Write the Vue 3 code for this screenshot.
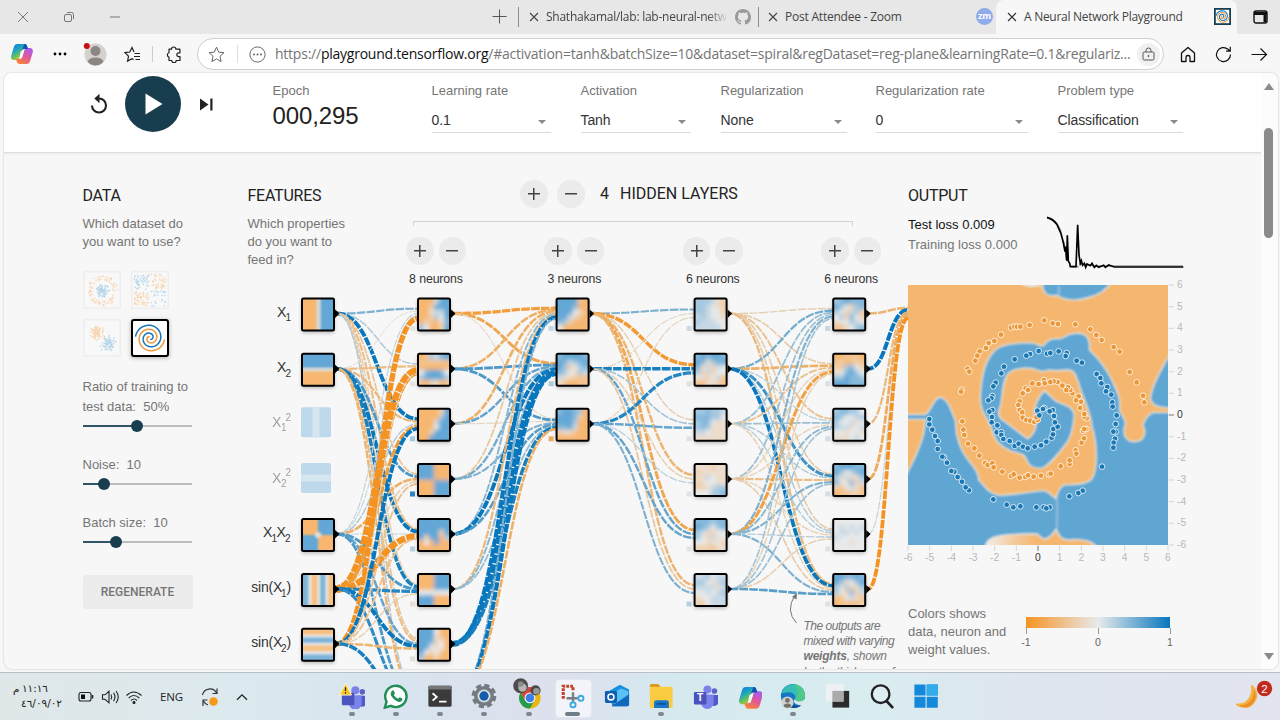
<script setup>
const rowY = [314.5, 369.8, 424.8, 480, 535, 590, 644.8, 700]
const colX = [434, 572.6, 710.6, 849.2]

const inputs = [
  { y: rowY[0], heat: 'vert' },
  { y: rowY[1], heat: 'horz' },
  { y: rowY[4], heat: 'quad' },
  { y: rowY[5], heat: 'sinv' },
  { y: rowY[6], heat: 'sinh' }
]

// 6x6 activation maps: 0 is fully orange, 4 neutral, 8 fully blue
const heat = [
  [
    '000588/002888/003558/002648/021037/640028',
    '016578/111111/000000/478874/688886/102301',
    '000028/000068/000588/000488/002888/008888',
    '888000/888000/888000/000888/000888/000888',
    '888888/888888/888828/828806/040800/000000',
    '000888/000888/000888/444444/888000/888000',
    '888400/888310/887240/884340/842410/600200',
    '888000/888000/888000/000888/000888/000888'
  ],
  ['888810/888700/888430/885310/762000/400000', '788887/875678/861467/764365/533211/310011', '788760/888720/888600/778500/233100/000000'],
  [
    '666532/665432/665442/565443/655544/555554',
    '787887/873678/735254/625244/432451/113321',
    '667665/777664/677433/676333/554333/333333',
    '333233/233333/335433/234433/223566/444667',
    '777677/876467/653244/642534/443342/222133',
    '556455/664356/555535/445456/344555/224555'
  ],
  [
    '678777/864267/642562/462742/344654/113467',
    '001110/120121/216742/347864/668776/888777',
    '677664/764456/644534/655345/443443/333454',
    '788877/864578/635336/743725/214531/011221',
    '444444/454545/455454/544444/444344/444444',
    '887787/863468/636236/642725/114531/011112'
  ]
]

function mix(v) {
  const t = Math.abs(v)
  const end = v < 0 ? [247, 183, 112] : [98, 167, 214]
  return 'rgb(' + [232, 234, 235].map((c, i) => Math.round(c + (end[i] - c) * t)).join(',') + ')'
}
function linkColor(v) {
  const t = Math.min(1, Math.abs(v))
  const end = v < 0 ? [245, 147, 34] : [8, 119, 189]
  return 'rgb(' + [226, 226, 222].map((c, i) => Math.round(c + (end[i] - c) * t)).join(',') + ')'
}
function cells(map) {
  const out = []
  map.split('/').forEach((row, r) => {
    row.split('').forEach((d, c) => {
      out.push({
        x: c === 0 ? -22 : c * 5 - 15, y: r === 0 ? -22 : r * 5 - 15,
        w: c === 0 || c === 5 ? 12.3 : 5.3, h: r === 0 || r === 5 ? 12.3 : 5.3,
        fill: mix((d - 4) / 4)
      })
    })
  })
  return out
}

const biases = [
  ['#e3e3df', '#e3e3df', '#a5c9e1', '#2e83be', '#b4cfe0', '#e6e0d5', '#e0dfd8', '#ddd'],
  ['#c3d8e5', '#a8cadf', '#f0aa5c'],
  ['#c9dbe6', '#e4dfd8', '#dfe2e3', '#dfe3e6', '#e2e3e3', '#b5cfe0'],
  ['#c5d9e5', '#d6e0e7', '#d3dfe6', '#d3dfe6', '#dde3e6', '#dde3e6']
]
const nodes = []
heat.forEach((layer, l) => layer.forEach((m, i) => {
  nodes.push({ x: colX[l], y: rowY[i], cells: cells(m), bias: biases[l][i] })
}))

// rows are source units, columns are destination units
const weights = [
  [[.4, .2, .95, -.3, -.4, -.2, -.3, .2], [-.06, -.42, -.45, .6, .9, .8, -.4, -.5], [.12, .1, .2, -.55, .12, .6, .5, .6], [.12, -1.7, -.75, -.2, -1.3, .75, .95, .7], [-1.02, -.1, .95, -.35, -.35, -.2, -.5, .8]],
  [[-.75, -.65, -.1], [-.55, .6, .6], [-.55, .5, -.12], [-.3, .45, .4], [.35, .95, .55], [-.45, .35, .3], [.95, 1.15, .8], [.4, 1.0, -.55]],
  [[.4, -.8, -.2, -.5, -.65, -.5], [-.12, .8, .25, -.22, .5, -.3], [-.15, .75, .5, .14, .5, .4]],
  [[-.2, -.25, -.35, -.25, -.25, -.45], [.45, -.55, .15, .65, .2, .9], [.3, -.35, .28, .2, .18, -.2], [.28, -.18, -.18, -.4, -.2, -.25], [.4, -.7, .35, .4, .18, .4], [.25, -.2, .25, .28, -.22, .55]],
  [[-.5], [.95], [-.45], [-.6], [.12], [-.9]]
]
const ys = [inputs.map(n => n.y), rowY, rowY.slice(0, 3), rowY.slice(0, 6), rowY.slice(0, 6), [314]]
const xs = [318, ...colX, 924]
const links = []
weights.forEach((layer, l) => {
  layer.forEach((row, i) => row.forEach((w, j) => {
    const x0 = xs[l] + 19
    const y0 = ys[l][i] - 1
    const x1 = xs[l + 1] - 16
    const y1 = ys[l + 1][j] - 1 + (i - (layer.length - 1) / 2) / layer.length * 12
    const m = (x0 + x1) / 2
    links.push({
      d: `M${x0} ${y0}C${m} ${y0} ${m} ${y1} ${x1} ${y1}`,
      c: linkColor(w * 1.15), w: .8 + Math.abs(w) * (Math.abs(w) > 1 ? 4.3 : 3.3), off: (i * 3 + j * 5) % 10
    })
  }))
})

let seed = 11
function rnd() { seed = (seed * 16807) % 2147483647; return seed / 2147483647 }
const circle = [], xor = [], gauss = []
for (let i = 0; i < 190; i++) {
  const a = rnd() * 6.28
  const inner = i % 2
  const r = inner ? rnd() * 6.5 : 10 + rnd() * 4.5
  circle.push({ x: 18 + r * Math.cos(a), y: 18 + r * Math.sin(a), b: inner })
  const px = rnd() * 28 - 14, py = rnd() * 28 - 14
  xor.push({ x: 17.5 + px + Math.sign(px), y: 17.5 + py + Math.sign(py), b: px * py > 0 })
  const s = (rnd() + rnd() + rnd() - 1.5) * 6, t = (rnd() + rnd() + rnd() - 1.5) * 6
  gauss.push({ x: (inner ? 23.5 : 12) + s, y: (inner ? 23 : 12) + t, b: inner })
}
function spiral(dir) {
  let d = ''
  for (let i = 0; i <= 70; i++) {
    const t = i / 70
    const a = t * 10.6 + (dir ? Math.PI : 0) + 0.3
    const r = 1.2 + t * 13.4
    d += (i ? 'L' : 'M') + (19 + r * Math.sin(a)).toFixed(1) + ' ' + (19 + r * Math.cos(a)).toFixed(1)
  }
  return d
}
const thumbs = [circle, xor, gauss]

const pairs = s => s.split(' ').map(p => p.split(','))
const orangeDots = pairs('462,421 418,435 487,430 503,432 555,433 362,443 372,440 380,440 390,440 332,464 312,483 295,489 287,504 268,514 261,527 255,542 232,566 237,575 214,629 212,635 600,448 618,465 634,480 670,501 688,515 718,576 739,607 758,647 762,667 216,724 219,749 222,765 233,791 252,805 267,827 284,849 292,855 306,850 310,862 336,875 362,888 370,883 388,893 405,891 413,886 430,890 452,887 476,883 481,881 511,859 538,852 538,841 556,811 558,821 574,788 581,775 578,752 588,747 582,747 589,715 582,710 582,702 569,684 572,665 565,649 557,661 546,640 540,630 533,622 528,630 516,617 502,606 490,604 480,606 461,600 463,610 445,612 426,610 406,625 413,630 397,640 388,664 384,675 388,690 396,697 397,713 408,720 420,722 432,726 442,720 438,712')
const blueDots = pairs('445,513 419,522 408,527 373,538 341,560 333,580 316,608 309,619 306,648 303,655 294,661 306,690 297,695 305,711 304,727 321,736 319,757 333,757 333,765 339,777 358,783 373,798 385,791 398,800 412,805 433,800 452,796 468,785 484,773 488,763 489,747 502,740 494,727 491,708 487,690 478,694 462,684 458,687 441,692 447,706 470,521 480,519 505,514 529,519 526,528 559,542 575,548 619,582 630,594 633,610 651,621 647,634 663,644 666,667 667,680 679,706 676,732 676,755 669,755 674,776 670,788 669,803 635,860 577,932 564,939 537,949 478,982 460,982 468,985 438,982 390,979 369,982 349,974 309,958 236,931 226,922 215,905 202,891 192,875 183,873 170,848 161,832 156,830 142,807 142,783 134,768 126,749 117,733 117,717')
const ticks = [-6, -5, -4, -3, -2, -1, 0, 1, 2, 3, 4, 5, 6]

const selects = [
  { label: 'Learning rate', value: '0.1', cls: 's1' },
  { label: 'Activation', value: 'Tanh', cls: 's2' },
  { label: 'Regularization', value: 'None', cls: 's3' },
  { label: 'Regularization rate', value: '0', cls: 's4' },
  { label: 'Problem type', value: 'Classification', cls: 's5' }
]
const sliders = [
  { name: 'Ratio of training to test data:', value: '50%', pos: 50 },
  { name: 'Noise:', value: '10', pos: 20 },
  { name: 'Batch size:', value: '10', pos: 31 }
]
const layerCounts = [8, 3, 6, 6]
</script>

<template>
  <div class="screen">
    <svg class="defs" width="0" height="0">
      <defs>
        <linearGradient id="cpA" x1="0" y1="0" x2=".6" y2="1"><stop offset="0" stop-color="#1b6fd8" /><stop offset=".4" stop-color="#19a5c4" /><stop offset=".75" stop-color="#7dc64b" /><stop offset="1" stop-color="#f5c81c" /></linearGradient>
        <linearGradient id="cpB" x1=".8" y1="0" x2=".3" y2="1"><stop offset="0" stop-color="#a45df0" /><stop offset=".5" stop-color="#e0569c" /><stop offset="1" stop-color="#f9843a" /></linearGradient>
        <symbol id="copilot" viewBox="0 0 24 24">
          <path d="M7.500 2h7.200c1.500 0 2 1 2.500 2.500l.8 2.500h-3.500c-1.800 0-2.500 1-3 2.800l-1.800 5.700C9.200 17 8.400 18 6.600 18H4.200C1.500 18 .6 15.800 1.300 13.400l2.500-8.200C4.500 3 5.500 2 7.500 2z" fill="url(#cpA)" />
          <path d="M16.500 22H9.300c-1.500 0-2-1-2.500-2.500L6 17h3.500c1.800 0 2.500-1 3-2.800l1.800-5.700C14.800 7 15.600 6 17.400 6h2.400c2.700 0 3.600 2.200 2.900 4.600l-2.500 8.200c-.7 2.200-1.700 3.200-3.700 3.200z" fill="url(#cpB)" />
          <path d="M10.800 9.200h3.200l-2.400 7H9.300z" fill="#f7f7f7" />
          <path d="M14.200 2h.5c1.500 0 2 1 2.500 2.500L18 7h-3.500c-1.200 0-1.900.4-2.400 1.300z" fill="#1552b8" />
        </symbol>
        <symbol id="teams" viewBox="0 0 26 26">
          <circle cx="21.500" cy="7" r="2.800" fill="#5b62c8" /><circle cx="14.500" cy="5.500" r="4" fill="#7b83eb" />
          <path d="M17 11h7.500c.8 0 1.300.5 1.300 1.300V17c0 3-2 5-4.600 5S17 20 17 17z" fill="#5059c9" />
          <path d="M8 10.500h11.500c.8 0 1.300.5 1.300 1.300V18c0 4-2.800 7-6.400 7S8 22 8 18z" fill="#7b83eb" />
          <rect x="1" y="8" width="12.500" height="12.500" rx="1.300" fill="#4b53bc" />
        </symbol>
      </defs>
    </svg>

    <header class="tabs">
      <div class="winctl">
        <svg width="12" height="12" viewBox="0 0 12 12"><path d="M1 1l10 10M11 1L1 11" stroke="#777" /></svg>
        <svg width="12" height="12" viewBox="0 0 12 12" fill="none" stroke="#777"><rect x="1.500" y="3.500" width="7" height="7" rx="1.500" /><path d="M4 1.500h4.500q2 0 2 2V8" /></svg>
        <svg width="12" height="12" viewBox="0 0 12 12"><path d="M1 6h10" stroke="#777" /></svg>
      </div>
      <svg class="plus" width="15" height="15" viewBox="0 0 15 15"><path d="M7.500 .5v14M.5 7.500h14" stroke="#555" /></svg>
      <div class="tab t1"><svg class="x" viewBox="0 0 10 10"><path d="M1 1l8 8M9 1L1 9" stroke="#444" stroke-width="1.100" /></svg><span class="fade">Shathakamal/lab: lab-neural-netw</span>
        <svg class="gh" width="16" height="16" viewBox="0 0 16 16"><path fill="#9a9a9a" d="M8 0C3.580 0 0 3.580 0 8c0 3.540 2.290 6.530 5.470 7.590.4.070.55-.17.55-.38 0-.19-.01-.82-.01-1.490-2.010.37-2.530-.49-2.690-.94-.09-.23-.48-.94-.82-1.130-.28-.15-.68-.52-.01-.53.63-.01 1.080.58 1.230.82.72 1.210 1.870.87 2.330.66.070-.52.28-.87.51-1.070-1.780-.2-3.640-.89-3.640-3.950 0-.87.31-1.590.82-2.150-.08-.2-.36-1.020.08-2.120 0 0 .67-.21 2.200.82.64-.18 1.320-.27 2-.27s1.360.090 2 .27c1.530-1.040 2.200-.82 2.200-.82.44 1.100.16 1.920.08 2.120.51.56.82 1.270.82 2.150 0 3.070-1.870 3.750-3.650 3.950.29.25.54.73.54 1.480 0 1.070-.01 1.930-.01 2.200 0 .21.15.46.55.38A8 8 0 0 0 16 8c0-4.420-3.580-8-8-8z" /></svg>
      </div>
      <div class="tab t2"><svg class="x" viewBox="0 0 10 10"><path d="M1 1l8 8M9 1L1 9" stroke="#444" stroke-width="1.100" /></svg><span>Post Attendee - Zoom</span><i class="zm">zm</i></div>
      <div class="tab t3"><svg class="x" viewBox="0 0 10 10"><path d="M1 1l8 8M9 1L1 9" stroke="#333" stroke-width="1.100" /></svg><span>A Neural Network Playground</span>
        <svg class="fav" width="17" height="17" viewBox="0 0 38 38"><rect x="2" y="2" width="34" height="34" fill="#fff" stroke="#173f54" stroke-width="4" /><path :d="spiral(0)" fill="none" stroke="#1c7fc0" stroke-width="2.500" /><path :d="spiral(1)" fill="none" stroke="#f0a04a" stroke-width="2.500" /></svg>
      </div>
      <svg class="sidebar" width="15" height="14" viewBox="0 0 15 14"><rect x="1" y="1" width="13" height="12" rx="2" fill="none" stroke="#111" stroke-width="1.400" /><path d="M1 2h13v3H1zM10.500 4h3v8h-3z" fill="#111" /></svg>
    </header>

    <nav class="toolbar">
      <svg class="cp" width="24" height="24"><use href="#copilot" /></svg>
      <svg class="more" width="14" height="4" viewBox="0 0 14 4"><circle cx="2" cy="2" r="1.400" /><circle cx="7" cy="2" r="1.400" /><circle cx="12" cy="2" r="1.400" /></svg>
      <svg class="ava" width="24" height="24" viewBox="0 0 24 24"><circle cx="12.500" cy="12.500" r="11" fill="#d4d1ce" /><circle cx="12.500" cy="9" r="5" fill="#8b8784" /><path d="M4.500 19.500q2-4 8-4t8 4q-3 4-8 4t-8-4z" fill="#8b8784" /><circle cx="3.800" cy="4" r="3" fill="#c80f14" /></svg>
      <svg class="favs" width="17" height="17" viewBox="0 0 17 17" fill="none" stroke="#222" stroke-width="1.200"><path d="M10 6L8 1.500 5.800 6 1 6.600l3.500 3.500-.9 5L8 12.800l1.500.8M10.500 7.500H16M10 10.500h6M11.500 13.500H16" /></svg>
      <i class="vsep"></i>
      <svg class="ext" width="17" height="17" viewBox="0 0 17 17" fill="none" stroke="#222" stroke-width="1.200" stroke-linejoin="round"><path d="M5.500 3.200a2.200 2.200 0 0 1 4.400 0h4v3.600h-1.200a1.700 1.700 0 1 0 0 3.800H14v3.900H10.200a2.200 2.200 0 0 1-4.400 0H3v-3.400a2.300 2.300 0 0 1 0-4.400V3.200z" /></svg>
      <div class="addr">
        <svg class="star" width="17" height="17" viewBox="0 0 17 17" fill="none" stroke="#666"><path d="M8.500 1.200l2.200 4.900 5.200.6-3.900 3.600 1.100 5.300-4.600-2.700-4.600 2.700L5 10.300 1.100 6.700l5.200-.6z" /></svg>
        <i class="asep"></i>
        <svg class="dots" width="17" height="17" viewBox="0 0 17 17"><circle cx="8.500" cy="8.500" r="7.600" fill="none" stroke="#666" /><circle cx="5" cy="8.500" r=".9" fill="#555" /><circle cx="8.500" cy="8.500" r=".9" fill="#555" /><circle cx="12" cy="8.500" r=".9" fill="#555" /></svg>
        <span class="url">https://<b>playground.tensorflow.org</b>/#activation=tanh&amp;batchSize=10&amp;dataset=spiral&amp;regDataset=reg-plane&amp;learningRate=0.1&amp;regulariz...</span>
        <span class="lock"><svg width="13" height="14" viewBox="0 0 13 14" fill="none" stroke="#555"><rect x="1" y="5" width="11" height="8" rx="1.200" /><path d="M4 5V3.500a2.500 2.500 0 0 1 5 0V5" /><circle cx="6.500" cy="9" r=".6" fill="#555" /></svg></span>
      </div>
      <svg class="home" width="16" height="17" viewBox="0 0 16 17" fill="none" stroke="#111" stroke-width="1.300"><path d="M1.500 7L8 1.500 14.500 7v8.500H10V11q0-1.500-2-1.500T6 11v4.500H1.500z" stroke-linejoin="round" /></svg>
      <svg class="reload" width="17" height="17" viewBox="0 0 17 17" fill="none" stroke="#111" stroke-width="1.200"><path d="M15.500 8.500A7 7 0 1 1 13 3.200L15 5M15.300 .8V5.200H11" /></svg>
      <svg class="fwd" width="17" height="15" viewBox="0 0 17 15" fill="none" stroke="#111" stroke-width="1.200"><path d="M.5 7.500h15M9.500 1.500l6 6-6 6" /></svg>
    </nav>

    <main class="page">
      <div class="content">
        <section class="controls">
          <svg class="reset" width="18" height="21" viewBox="0 0 18 21"><path d="M9 5.500a7 7 0 1 1-7 7" fill="none" stroke="#222" stroke-width="2.100" /><path d="M9.500 .8v9.400L4.300 5.500z" fill="#222" /></svg>
          <div class="play"><svg width="18" height="22" viewBox="0 0 18 22"><path d="M.5 .5v21L17.500 11z" fill="#fff" /></svg></div>
          <svg class="step" width="13" height="13" viewBox="0 0 13 13"><path d="M0 .5v12L8.500 6.500zM10.300 .5h2.200v12h-2.200z" fill="#222" /></svg>
          <div class="epoch"><label>Epoch</label><strong>000,295</strong></div>
          <div v-for="s in selects" :key="s.label" class="sel" :class="s.cls">
            <label>{{ s.label }}</label>
            <div class="val">{{ s.value }}<i></i></div>
          </div>
        </section>

        <section class="body">
          <div class="col data">
            <h4>DATA</h4>
            <p>Which dataset do<br>you want to use?</p>
            <div class="thumbs">
              <svg v-for="(t, k) in thumbs" :key="k" class="thumb" viewBox="0 0 36 36">
                <rect x=".7" y=".7" width="34.600" height="34.600" fill="#f8f8f8" stroke="#eeeeee" stroke-width="1.500" />
                <rect v-for="(p, n) in t" :key="n" :x="p.x" :y="p.y" width="1.200" height="1.200" :fill="p.b ? '#b7d5ea' : '#f8d5b1'" />
              </svg>
              <svg class="thumb on" viewBox="0 0 38 38"><rect x="1" y="1" width="36" height="36" rx="2" fill="#fff" stroke="#000" stroke-width="2" /><path :d="spiral(1)" fill="none" stroke="#f0983a" stroke-width="1.500" /><path :d="spiral(0)" fill="none" stroke="#1678ba" stroke-width="1.500" /></svg>
            </div>
            <div v-for="s in sliders" :key="s.name" class="slider">
              <label>{{ s.name }}&nbsp; {{ s.value }}</label>
              <div class="track"><i :style="{ width: s.pos + '%' }"></i><b :style="{ left: s.pos + '%' }"></b></div>
            </div>
            <button class="regen">REGENERATE</button>
          </div>

          <div class="col features">
            <h4>FEATURES</h4>
            <p>Which properties<br>do you want to<br>feed in?</p>
          </div>

          <div class="col network">
            <div class="layers"><span class="rb plusb"></span><span class="rb"></span><b>4</b><b>HIDDEN LAYERS</b></div>
            <div class="bracket"></div>
            <div class="groups">
              <div v-for="(n, i) in layerCounts" :key="i" class="group">
                <div><span class="rb plusb"></span><span class="rb"></span></div>
                <small>{{ n }} neurons</small>
              </div>
            </div>
          </div>

          <div class="col output">
            <h4>OUTPUT</h4>
            <div class="loss">
              <div><p class="test">Test loss 0.009</p><p>Training loss 0.000</p></div>
              <svg width="138" height="56" viewBox="467 105 414 168" fill="none" stroke="#000"><path d="M470 114Q495 112 510 150L520 190M520 185L530 240M545 260h20M566 252L610 256M610 258H878" stroke="#999" stroke-width="5" /><path d="M470 112Q490 118 500 134Q514 160 519 188L524 215L526 200L529 242L531 166L534 244L538 250L540 260H557L562 134L566 225L570 250L573 242L577 256L582 250L586 262L590 252L600 257L605 250L612 262L618 256L625 262L640 256L645 262L655 255L672 261H879" stroke-width="5" /></svg>
            </div>
            <svg class="map" width="290" height="286" viewBox="53 315 870 858">
              <defs>
                <filter id="soft" x="-5%" y="-5%" width="110%" height="110%"><feGaussianBlur stdDeviation="2.400" /></filter>
                <clipPath id="mapclip"><rect x="53" y="315" width="780" height="780" /></clipPath>
                <linearGradient id="pale" x1="285" x2="440" y1="0" y2="0" gradientUnits="userSpaceOnUse"><stop offset="0" stop-color="#f2f0ec" /><stop offset=".5" stop-color="#f4cda2" /><stop offset="1" stop-color="#f5b670" /></linearGradient>
              </defs>
              <g clip-path="url(#mapclip)">
                <rect x="53" y="315" width="780" height="780" fill="#f5b670" />
                <g filter="url(#soft)" stroke="#e2e6e4" stroke-width="4" fill="#60a6d3">
                  <path d="M385 306Q410 326 456 316" fill="#eee" />
                  <path d="M456 305C455 340 470 352 500 346C520 362 560 364 590 354C630 345 650 330 662 305Z" />
                  <path d="M843 515C800 590 785 620 780 655C783 675 800 683 843 684Z" />
                  <path d="M40 703L105 703C125 690 130 650 150 652C175 655 185 700 197 725C195 745 200 780 215 810C235 850 268 870 265 900C280 910 290 940 325 945C380 945 440 930 465 932C480 940 490 950 497 956C500 945 503 925 520 915C550 912 590 915 605 895C625 860 618 780 605 740C600 690 575 650 565 610C555 580 550 570 530 570C500 572 490 575 475 570C460 578 450 575 440 570C415 560 370 565 355 580C335 600 338 650 330 680C320 700 325 715 345 725C370 745 390 760 412 776C430 765 435 750 437 735C430 710 425 670 462 632C475 640 485 655 500 665C525 675 550 680 552 705C550 740 545 770 525 795C500 825 480 855 455 865C430 865 420 860 412 848C405 825 395 820 365 815C335 800 315 790 305 750C295 715 268 700 270 650C272 600 280 545 310 515C330 490 380 488 425 488C440 490 450 500 458 497C470 485 475 475 500 475C525 480 520 462 550 460C585 455 600 470 598 510C625 535 645 560 665 600C680 635 692 650 688 690C695 710 710 720 705 735C695 760 705 785 733 785C762 785 770 755 757 735C765 715 775 700 790 697L845 697L845 1105L40 1105L40 898C75 835 90 800 100 760L105 718L40 718Z" />
                  <path d="M500 956V1050M506 318V345" stroke="#a9cbdc" stroke-width="4" />
                  <path d="M285 1105C285 1070 320 1064 400 1062L440 1062C450 1070 455 1078 465 1077C480 1072 490 1060 497 1048C505 1065 510 1080 540 1080C580 1075 610 1085 622 1105Z" fill="url(#pale)" />
                </g>
              </g>
              <g stroke="#fff" stroke-width="2.400">
                <circle v-for="(p, i) in orangeDots" :key="'o' + i" :cx="p[0]" :cy="p[1]" r="8.600" fill="#ea9836" />
                <circle v-for="(p, i) in blueDots" :key="'b' + i" :cx="p[0]" :cy="p[1]" r="8.600" fill="#1877b5" />
              </g>
              <g class="axis">
                <g v-for="t in ticks" :key="t" :class="{ zero: t === 0 }">
                  <path :d="`M${443 + t * 65} 1097v16M835 ${705 - t * 65}h16`" />
                  <text :x="443 + t * 65" y="1143" text-anchor="middle">{{ t }}</text>
                  <text x="860" :y="714 - t * 65">{{ t }}</text>
                </g>
              </g>
            </svg>
            <div class="legend">
              <p>Colors shows<br>data, neuron and<br>weight values.</p>
              <div class="scale"><div class="bar"></div><div class="marks"><span>-1</span><span>0</span><span>1</span></div></div>
            </div>
          </div>

          <svg class="net" width="1256" height="516" viewBox="4 153 1256 516">
            <defs>
              <filter id="px" x="-20%" y="-20%" width="140%" height="140%"><feGaussianBlur stdDeviation="2" /></filter>
              <filter id="fine" x="-20%" y="-20%" width="140%" height="140%"><feGaussianBlur stdDeviation=".9" /></filter>
              <filter id="drop" x="-30%" y="-30%" width="160%" height="160%"><feGaussianBlur stdDeviation="2" /></filter>
              <clipPath id="box"><rect x="-16" y="-16" width="32" height="32" /></clipPath>
              <clipPath id="netclip"><rect x="4" y="153" width="904" height="516" /></clipPath>
            </defs>
            <g clip-path="url(#netclip)" fill="none">
              <path v-for="(l, i) in links" :key="i" :d="l.d" :stroke="l.c" :stroke-width="l.w" stroke-dasharray="8.500 1.300" :stroke-dashoffset="l.off" />
            </g>

            <g v-for="(n, i) in inputs" :key="'in' + i" :transform="`translate(318 ${n.y})`">
              <rect x="-16" y="-14" width="32" height="32" fill="#000" opacity=".3" filter="url(#drop)" />
              <g clip-path="url(#box)">
                <rect x="-16" y="-16" width="32" height="32" fill="#f7b770" />
                <g filter="url(#fine)">
                  <template v-if="n.heat === 'vert'"><rect x="0" y="-22" width="24" height="44" fill="#62a7d6" /><rect x="-1.500" y="-22" width="4" height="44" fill="#d9dcd8" /></template>
                  <template v-if="n.heat === 'horz'"><rect x="-22" y="-22" width="44" height="21" fill="#62a7d6" /><rect x="-22" y="-2" width="44" height="3.500" fill="#d9dcd8" /></template>
                  <template v-if="n.heat === 'quad'"><rect x="0" y="-22" width="24" height="22" fill="#62a7d6" /><rect x="-22" y="0" width="22" height="22" fill="#62a7d6" /><circle r="3" fill="#dfe0da" /></template>
                  <g v-if="n.heat === 'sinv' || n.heat === 'sinh'" :transform="n.heat === 'sinh' ? 'rotate(-90)' : ''">
                    <rect x="-22" y="-22" width="44" height="44" fill="#e6e7e5" />
                    <rect x="-22" y="-22" width="12.500" height="44" fill="#7db4da" /><rect x="-6.500" y="-22" width="6" height="44" fill="#f7c083" /><rect x="2" y="-22" width="5.500" height="44" fill="#7db4da" /><rect x="10" y="-22" width="12" height="44" fill="#f7c083" />
                  </g>
                </g>
              </g>
              <rect x="-16" y="-16" width="32" height="32" rx="1.500" fill="none" stroke="#000" stroke-width="2" />
              <path d="M17 -5l4.500 4-4.500 4.500z" />
            </g>
            <g class="lbl">
              <text x="277" y="316.500">X</text><text x="285.500" y="321" class="s">1</text>
              <text x="277" y="372">X</text><text x="285.500" y="376.500" class="s">2</text>
              <g opacity=".45"><text x="272" y="426.500">X</text><text x="281" y="431" class="s">1</text><text x="285.500" y="420.500" class="s">2</text>
                <text x="272" y="482.500">X</text><text x="281" y="486.500" class="s">2</text><text x="285.500" y="476" class="s">2</text></g>
              <text x="263" y="537">X</text><text x="271.500" y="541.500" class="s">1</text><text x="276.500" y="537">X</text><text x="285" y="541.500" class="s">2</text>
              <text x="251.300" y="592">sin(X</text><text x="281" y="596.500" class="s">1</text><text x="286.500" y="592">)</text>
              <text x="251.300" y="647">sin(X</text><text x="281" y="651.500" class="s">2</text><text x="286.500" y="647">)</text>
            </g>
            <g transform="translate(301 407.300)"><rect width="30" height="30" rx="2" fill="#bfd9ec" /><rect x="11.500" width="7" height="30" fill="#d5e6f1" /></g>
            <g transform="translate(301 463)"><rect width="30" height="30" rx="2" fill="#bfd9ec" /><rect y="11.500" width="30" height="7" fill="#d5e6f1" /></g>

            <g v-for="(n, i) in nodes" :key="'n' + i" :transform="`translate(${n.x} ${n.y})`">
              <rect x="-16" y="-14" width="32" height="32" fill="#000" opacity=".3" filter="url(#drop)" />
              <g clip-path="url(#box)">
                <g filter="url(#px)"><rect v-for="(c, k) in n.cells" :key="k" :x="c.x" :y="c.y" :width="c.w" :height="c.h" :fill="c.fill" /></g>
              </g>
              <rect x="-16" y="-16" width="32" height="32" rx="1.500" fill="none" stroke="#000" stroke-width="2" />
              <path d="M17 -5l4.500 4-4.500 4.500z" />
              <rect x="-24" y="11.500" width="5" height="5" :fill="n.bias" />
            </g>

            <path d="M796.500 623Q785 611 795 595" fill="none" stroke="#777" /><path d="M797 593l-.5 6.500-4.500-2.500z" fill="#777" />
            <g class="note">
              <text x="803.500" y="629.500" textLength="77">The outputs are</text>
              <text x="803.500" y="644.500" textLength="91">mixed with varying</text>
              <text x="803.500" y="660"><tspan font-weight="bold">weights</tspan>, shown</text>
              <text x="803.500" y="675.500" textLength="91">by the thickness of</text>
            </g>
          </svg>
        </section>
      </div>
      <aside class="scroll"><i class="up"></i><b></b><i class="down"></i></aside>
    </main>

    <footer class="taskbar">
      <div class="clock" dir="rtl"><span>١١:١٦ م</span><span>٤٦/٠٩/٠٢</span></div>
      <svg class="tray" width="68" height="18" viewBox="0 0 68 18" fill="none" stroke="#222" stroke-width="1.100">
        <rect x="1" y="4.500" width="12" height="8.500" rx="2" /><rect x="3" y="6.500" width="4" height="4.500" fill="#111" stroke="none" /><path d="M14.500 7v3.500" stroke-width="1.600" />
        <path d="M24.500 6.800h2.500l4-3.500v11.500l-4-3.500h-2.500zM33 6.500q1.500 2.500 0 5M35.500 4.800q3 4.200 0 8.400M38 3q4.500 6 0 12" />
        <path d="M48.500 7.500q7-7 15 0M50.700 10q5-5 10.600 0M53 12.500q3-3 6 0" /><circle cx="56" cy="14.500" r="1" fill="#222" />
      </svg>
      <span class="eng">ENG</span>
      <svg class="sync" width="18" height="20" viewBox="0 0 18 20" fill="none" stroke="#333" stroke-width="1.200"><path d="M1.500 8A7.500 7.500 0 0 1 15.500 6M16 1.500V6.500H11.500M2 19V13H6.500M2.500 14q1.500 3 4.500 4" /><circle cx="12.500" cy="14.500" r="4.300" fill="#f79a1c" stroke="none" /></svg>
      <svg class="chev" width="12" height="8" viewBox="0 0 12 8"><path d="M1 6.800L6 1.800l5 5" fill="none" stroke="#222" stroke-width="1.300" /></svg>
      <div class="apps">
        <div class="app run"><svg viewBox="0 0 28 28"><svg x="2" y="2" width="26" height="26"><use href="#teams" /></svg><path d="M7 .5L13.500 13H.5z" fill="#f8c71d" stroke="#fff6cf" /><path d="M7 4.500v4M7 10v1.500" stroke="#222" stroke-width="1.300" /></svg></div>
        <div class="app run"><svg viewBox="0 0 28 28"><path d="M2 26.500l1.800-6.500A11.500 11.500 0 1 1 8.500 24.600z" fill="#fff" stroke="#1f8f57" stroke-width="2.600" /><path d="M9.500 8.500q1.500-1.500 2.300.3l1 2.300q.1.700-1.200 1.900 1.800 3 4.600 4 1.400-1.800 1.900-1.600l2.600 1.400q.9 3-3 3.700-3 .1-6.700-3.700-4.600-5-1.500-8.300z" fill="#1f8f57" /></svg></div>
        <div class="app run"><svg viewBox="0 0 28 28"><rect x="1.500" y="3" width="25" height="22.500" rx="1.500" fill="#3b3b3b" /><path d="M1.500 4.500q0-1.500 1.500-1.500h22q1.500 0 1.500 1.500V7h-25z" fill="#777" /><path d="M6 11l4.500 4L6 19M13 20h8" fill="none" stroke="#fff" stroke-width="2" /></svg></div>
        <div class="app run"><svg viewBox="0 0 28 28"><circle cx="14" cy="14" r="10.800" fill="#747b81" /><circle cx="14" cy="14" r="11.500" fill="none" stroke="#747b81" stroke-width="3.600" stroke-dasharray="5.500 3.530" /><circle cx="14" cy="14" r="7" fill="#d9dee2" /><circle cx="14" cy="14" r="5" fill="#155da8" /></svg></div>
        <div class="app run"><svg viewBox="0 0 28 28" overflow="visible"><circle cx="15" cy="16" r="11.500" fill="#eab711" /><path d="M5 10A11.500 11.500 0 0 1 25 10L15 10.500 10 19z" fill="#db4337" /><path d="M4.900 10.200A11.500 11.500 0 0 0 15 27.500L20 18.500 10 19z" fill="#259b50" /><circle cx="15" cy="16" r="5.800" fill="#fff" /><circle cx="15" cy="16" r="4.700" fill="#3f7de8" /><g><circle cx="5" cy="3" r="8" fill="#4d4d4d" /><circle cx="7" cy="5" r="4.500" fill="#b5b5b5" /><circle cx="5" cy="1" r="3" fill="#8a8a8a" /><circle cx="21" cy="8" r="5.500" fill="#4a4a4a" /><circle cx="22" cy="9" r="3.500" fill="#989898" /></g></svg></div>
        <div class="app run active"><svg viewBox="0 0 28 28" fill="none"><path d="M3.500 17V3.500h10.500V9" stroke="#c9412a" stroke-width="3.400" stroke-dasharray="3 1.200" /><path d="M14 10v10M7 16.500h12" stroke="#777f86" stroke-width="2.600" /><circle cx="22.500" cy="16.500" r="2.800" stroke="#3ba7e3" stroke-width="2" /><circle cx="14" cy="23.500" r="2.800" stroke="#3ba7e3" stroke-width="2" /></svg></div>
        <div class="app"><svg viewBox="0 0 28 28"><path d="M5 9L17 2l10 5v16q0 2-2 2H9z" fill="#1790df" /><path d="M9 12l9-6 8 3v7l-14 9z" fill="#58c1f5" /><path d="M8 25l19-13v11q0 2-2 2z" fill="#1268b8" /><rect x="1" y="8.500" width="13" height="13" rx="1.500" fill="#0f5fb0" /><circle cx="7.500" cy="15" r="3.200" fill="none" stroke="#fff" stroke-width="1.700" /></svg></div>
        <div class="app run"><svg viewBox="0 0 28 28"><path d="M2 3q0-2 2-2h7l3 3.500H2z" fill="#d9961a" /><path d="M2 4h23q1.500 0 1.500 1.500V25q0 2-2 2h-21q-1.500 0-1.500-1.500z" fill="#fbcb42" /><path d="M6.500 27v-6q0-2.500 2.500-2.500h11q2.500 0 2.500 2.500v6z" fill="#1878c7" /><path d="M9.500 22.500h10" stroke="#0b4f92" stroke-width="1.700" /></svg></div>
        <div class="app"><svg viewBox="0 0 28 28"><svg x="1" y="1" width="26" height="26"><use href="#teams" /></svg><text x="5.300" y="19.700" class="tt">T</text></svg></div>
        <div class="app"><svg viewBox="0 0 28 28"><svg x="2" y="2" width="25" height="25"><use href="#copilot" /></svg></svg></div>
        <div class="app run"><svg viewBox="0 0 28 28"><circle cx="14" cy="14" r="13" fill="#1676c4" /><path d="M1.500 11A13 13 0 0 1 27 14c0 4-3 6-6.500 6-3 0-5-1-4-3 1-4-3-7-7-7-4 0-6.500 1.500-8 1z" fill="#35bfb4" /><path d="M14 1A13 13 0 0 1 27 14c0 4-3 6-6.500 6-3 0-5-1-4-3C21 12 20 5 14 1z" fill="#4fc987" /><path d="M11 16c-1 5 4 10 12 8-4 4-11 4-15 0z" fill="#124f8f" /><path d="M16.500 17q-1 3 4 3q4 0 5.800-2.500l1.700 3-4 3.500q-8 0-9.500-5z" fill="#dbe8ee" /><circle cx="8" cy="21" r="6.500" fill="#d5d1ce" /><circle cx="8" cy="18.800" r="2.600" fill="#77716d" /><path d="M3.800 25q.5-3 4.200-3t4.200 3q-4 3.500-8.400 0z" fill="#77716d" /></svg></div>
        <div class="app"><svg viewBox="0 0 28 28"><rect x="8" y="8.500" width="18" height="18" fill="#2c2c2c" /><rect x="1" y="1" width="19" height="19" fill="#f2f2f2" opacity=".85" /><path d="M8 8.500h12V20H8z" fill="#aaa" /></svg></div>
        <div class="app"><svg viewBox="0 0 28 28" fill="none" stroke="#222"><circle cx="12.500" cy="12" r="9.500" stroke-width="2.500" fill="#dfeef2" /><path d="M19 19.500l6 6.500" stroke-width="3" stroke-linecap="round" /></svg></div>
        <div class="app"><svg viewBox="0 0 28 28" fill="#1489dc"><path d="M1.500 1.500h12v12h-12zM14.700 1.500h12v12h-12zM1.500 14.700h12v12h-12zM14.700 14.700h12v12h-12z" /><path d="M14.700 1.500h12v12h-12z" fill="#31adea" /></svg></div>
      </div>
      <svg class="moon" width="38" height="36" viewBox="0 0 38 36"><path d="M17 7q8 9 1 17Q12 31 2 25.500 10 26.500 15 19 18 13 17 7z" fill="#f5b13f" stroke="#f5b13f" stroke-width="2" stroke-linejoin="round" /><path d="M19 11q4 7-1 13Q12 31 4 26.500 12 27 17 20 19 16 19 11z" fill="#ec8e27" /><circle cx="29.500" cy="9.500" r="7.700" fill="#c02b1e" /><text x="29.500" y="14" text-anchor="middle" class="badge">2</text></svg>
    </footer>
  </div>
</template>

<style>
body { margin: 0; overflow: hidden; }
</style>

<style scoped>
.screen { width: 1280px; height: 720px; display: flex; flex-direction: column; background: #f7f7f7; font-family: "Liberation Sans", Arial, sans-serif; color: #222; overflow: hidden; }
.screen * { box-sizing: border-box; }
.screen svg { flex: none; }
.defs { position: absolute; }
p, h4 { margin: 0; }

.tabs { height: 34px; flex: none; background: #e7e7e7; display: flex; align-items: center; font-family: "Open Sans", "Noto Sans", sans-serif; font-size: 12px; color: #444; padding-bottom: 1px; }
.winctl { display: flex; gap: 34px; padding-left: 17px; width: 492px; }
.plus { margin-right: 11px; }
.tab { display: flex; align-items: center; height: 20px; border-left: 1px solid #8d8d8d; white-space: nowrap; }
.tab .x { width: 10px; height: 10px; margin-left: 10px; margin-right: 7px; }
.t1 { width: 240px; letter-spacing: -.25px; }
.fade { width: 184px; -webkit-mask-image: linear-gradient(90deg, #000 88%, transparent 99%); mask-image: linear-gradient(90deg, #000 88%, transparent 99%); }
.gh { margin-left: 5px; }
.t2 { width: 238px; }
.t2 .x { margin-left: 9px; }
.t2 span { width: 191px; letter-spacing: -.22px; }
.zm { width: 17px; height: 17px; border-radius: 50%; background: #8fabe9; color: #fff; font: bold 9px/16px "Open Sans", sans-serif; text-align: center; }
.t3 { width: 241px; height: 34px; background: #f7f7f7; border: 0; border-radius: 8px 8px 0 0; }
.t3 .x { margin-left: 11px; }
.t3 span { width: 190px; letter-spacing: -.28px; }
.sidebar { margin-left: 16px; }

.toolbar { height: 39px; flex: none; display: flex; align-items: center; padding-top: 1px; }
.cp { margin-left: 10px; }
.more { margin-left: 19px; }
.ava { margin-left: 16px; }
.favs { margin-left: 17px; }
.vsep { width: 1px; height: 16px; background: #ccc; margin-left: 11px; }
.ext { margin-left: 13px; }
.addr { margin-left: 14px; width: 967px; height: 32px; border: 1px solid #d0d0d0; border-radius: 16px; background: #fff; display: flex; align-items: center; }
.star { margin-left: 10px; }
.asep { width: 1px; height: 18px; background: #ddd; margin: 0 11px 0 12px; }
.url { margin-left: 9px; width: 862px; font: 14px/20px "Open Sans", "Noto Sans", sans-serif; color: #757575; white-space: nowrap; letter-spacing: -.235px; }
.url b { font-weight: normal; color: #111; }
.lock { width: 23px; height: 23px; border-radius: 50%; background: #f0f0f0; display: flex; align-items: center; justify-content: center; }
.home { margin-left: 16px; }
.reload { margin-left: 19px; }
.fwd { margin-left: 19px; }

.page { width: 1274px; height: 596px; margin-left: 4px; flex: none; display: flex; background: #f7f7f7; border-radius: 8px; overflow: hidden; box-shadow: 0 0 2px #bbb; }
.content { width: 1257px; flex: none; }
.controls { height: 80px; background: #fff; border-bottom: 1px solid #dedede; display: flex; align-items: flex-start; box-shadow: 0 1px 2px rgba(0,0,0,.06); }
.reset { margin: 20px 0 0 85.500px; }
.play { width: 56px; height: 56px; margin: 3px 0 0 17px; border-radius: 50%; background: #183d4e; display: flex; align-items: center; justify-content: center; padding-left: 3px; }
.step { margin: 25px 0 0 19px; }
label { display: block; font-size: 13px; line-height: 16px; color: #757575; white-space: nowrap; }
.epoch { width: 159px; margin: 10px 0 0 60px; }
.epoch strong { display: block; font-weight: normal; font-size: 24px; line-height: 28px; margin-top: 3px; letter-spacing: -.1px; }
.sel { margin-top: 10px; }
.val { height: 26px; margin-top: 8px; border-bottom: 1px solid #dadada; display: flex; justify-content: space-between; font-size: 14px; line-height: 26px; color: #333; letter-spacing: -.1px; }
.val i { border: 4px solid transparent; border-top-color: #8a8a8a; border-bottom: 0; margin: 13px 5px 0 0; height: 4px; }
.s1 { width: 119px; margin-right: 30px; }
.s2 { width: 110px; margin-right: 30px; }
.s3 { width: 126px; margin-right: 29px; }
.s4 { width: 152px; margin-right: 30px; }
.s5 { width: 125px; }

.body { position: relative; height: 516px; padding-left: 78.500px; display: grid; grid-template-columns: 165px 158.500px 502px 1fr; }
.net { position: absolute; left: 0; top: 0; pointer-events: none; }
.col { padding-top: 33px; }
h4, .layers b { font: 400 16px/20px Roboto, sans-serif; color: #222; letter-spacing: -.25px; }
.layers b { letter-spacing: 0; }
.col > p, .legend p { font-size: 13px; line-height: 18px; color: #757575; margin-top: 9px; }
.thumbs { margin: 20px 0 0 0; display: grid; grid-template-columns: 38px 38px; gap: 10px; height: 86px; }
.thumb { width: 38px; height: 38px; }
.thumb.on { filter: drop-shadow(0 1px 2px rgba(0,0,0,.3)); }
.slider { padding-top: 20px; width: 109px; height: 58px; }
.slider:nth-of-type(2) { height: 78px; }
.slider label { line-height: 20px; white-space: normal; width: 115px; }
.track { position: relative; height: 2px; background: #bdbdbd; margin-top: 7.500px; }
.track i { display: block; height: 2px; background: #315567; }
.track b { position: absolute; top: -5px; width: 12px; height: 12px; margin-left: -6px; border-radius: 50%; background: #183d4e; }
.regen { margin-top: 24px; width: 110px; height: 34px; border: 0; padding: 0; border-radius: 2px; background: #ececec; color: #757575; font: 500 12px Roboto, sans-serif; display: block; }

.network { padding-top: 27px; }
.layers { display: flex; align-items: center; padding-left: 114px; height: 28px; }
.rb { position: relative; display: inline-block; width: 28px; height: 28px; border-radius: 50%; background: linear-gradient(#444, #444) center / 12px 1.500px no-repeat #ebebeb; }
.plusb { background: linear-gradient(#444, #444) center / 12px 1.500px no-repeat, linear-gradient(#444, #444) center / 1.500px 12px no-repeat #ebebeb; }
.layers .rb + .rb { margin-left: 9px; }
.layers b { margin-left: 15px; }
.layers b + b { margin-left: 11px; }
.bracket { width: 440px; height: 5px; margin: 13px 0 0 7px; border: 1px solid #d3d3d3; border-bottom: 0; }
.groups { display: flex; gap: 78.400px; margin-top: 11px; }
.group { width: 60px; text-align: center; }
.group div { display: flex; gap: 5px; height: 28px; }
.group small { display: block; font-size: 12.300px; line-height: 16px; margin: 6px -5px 0; white-space: nowrap; color: #333; letter-spacing: -.1px; }

.loss { display: flex; height: 66px; margin-top: 9px; }
.loss div { width: 138px; }
.loss p { font-size: 13px; line-height: 20px; color: #757575; white-space: nowrap; }
.loss .test { color: #111; }
.map { display: block; margin-top: 4px; overflow: visible; }
.axis path { stroke: #d5d5d5; stroke-width: 3; }
.axis text { font-size: 31px; fill: #b7b7b7; }
.axis .zero path { stroke: #777; }
.axis .zero text { fill: #333; }
.legend { display: flex; margin-top: 34px; }
.legend p { margin: 0; width: 118px; white-space: nowrap; }
.scale { width: 144px; margin-top: 12px; }
.bar { height: 11px; background: linear-gradient(90deg, #f59322, #e8eaeb 50%, #0877bd); }
.marks { display: flex; justify-content: space-between; margin: 0 -10px; font-size: 10.500px; color: #666; }
.marks span { width: 20px; text-align: center; line-height: 12px; }
.marks span::before { content: ""; display: block; width: 1px; height: 6px; background: #999; margin: 0 auto 2px; }
.lbl text { font: 14px "Liberation Sans", Arial, sans-serif; fill: #333; letter-spacing: -.2px; }
.lbl .s { font-size: 10px; }
.note text { font: italic 12px "Liberation Sans", Arial, sans-serif; fill: #757575; letter-spacing: -.2px; }

.scroll { width: 17px; background: #fcfcfc; display: flex; flex-direction: column; align-items: center; padding: 10px 2px 0 0; }
.scroll i { border: 5px solid transparent; }
.scroll .up { border-bottom: 7px solid #8b8b8b; border-top: 0; }
.scroll b { width: 9px; height: 110px; border-radius: 5px; background: #8b8b8b; margin-top: 38px; }
.scroll .down { border-top: 7px solid #8b8b8b; border-bottom: 0; margin-top: 415px; }

.taskbar { margin-top: 3px; height: 48px; flex: none; border-top: 1px solid #b9bfc4; background: linear-gradient(90deg, #dfe7e8 0, #dce9ee 18%, #d8e4ef 32%, #dde0ed 43%, #d5e9ef 53%, #d9edf0 68%, #dee5ee 80%, #e2e4ee 100%); display: flex; align-items: center; }
.clock { width: 62px; display: flex; flex-direction: column; align-items: flex-start; font: 10.500px/15px "DejaVu Sans", sans-serif; color: #222; letter-spacing: -.5px; padding-bottom: 2px; }
.clock span:first-child { padding-right: 14px; word-spacing: -1px; letter-spacing: -1.300px; }
.tray { margin-left: 16px; }
.eng { margin-left: 14px; width: 24px; font: 11.500px "Open Sans", "Noto Sans", sans-serif; letter-spacing: -.2px; color: #222; }
.sync { margin-left: 17px; }
.chev { margin-left: 17px; }
.apps { display: flex; margin-left: 82px; }
.app { position: relative; width: 44.150px; height: 47px; display: flex; align-items: center; justify-content: center; padding-bottom: 1px; }
.app svg { width: 26px; height: 26px; position: relative; }
.app svg svg { width: auto; height: auto; }
.run::after { content: ""; position: absolute; bottom: 4px; left: 19px; width: 6px; height: 4px; border-radius: 2px; background: #7f878c; }
.active::before { content: ""; position: absolute; left: 4px; top: 6px; width: 35px; height: 37px; border-radius: 4px; background: #f2f4f9; border: 1px solid #e3e7ef; }
.active::after { left: 14px; width: 15px; background: #6f7d89; }
.tt { font: bold 11px "Liberation Sans", sans-serif; fill: #fff; }
.moon { margin-left: auto; margin-right: 7px; }
.badge { font: 11.500px "Liberation Sans", sans-serif; fill: #fff; }
</style>
